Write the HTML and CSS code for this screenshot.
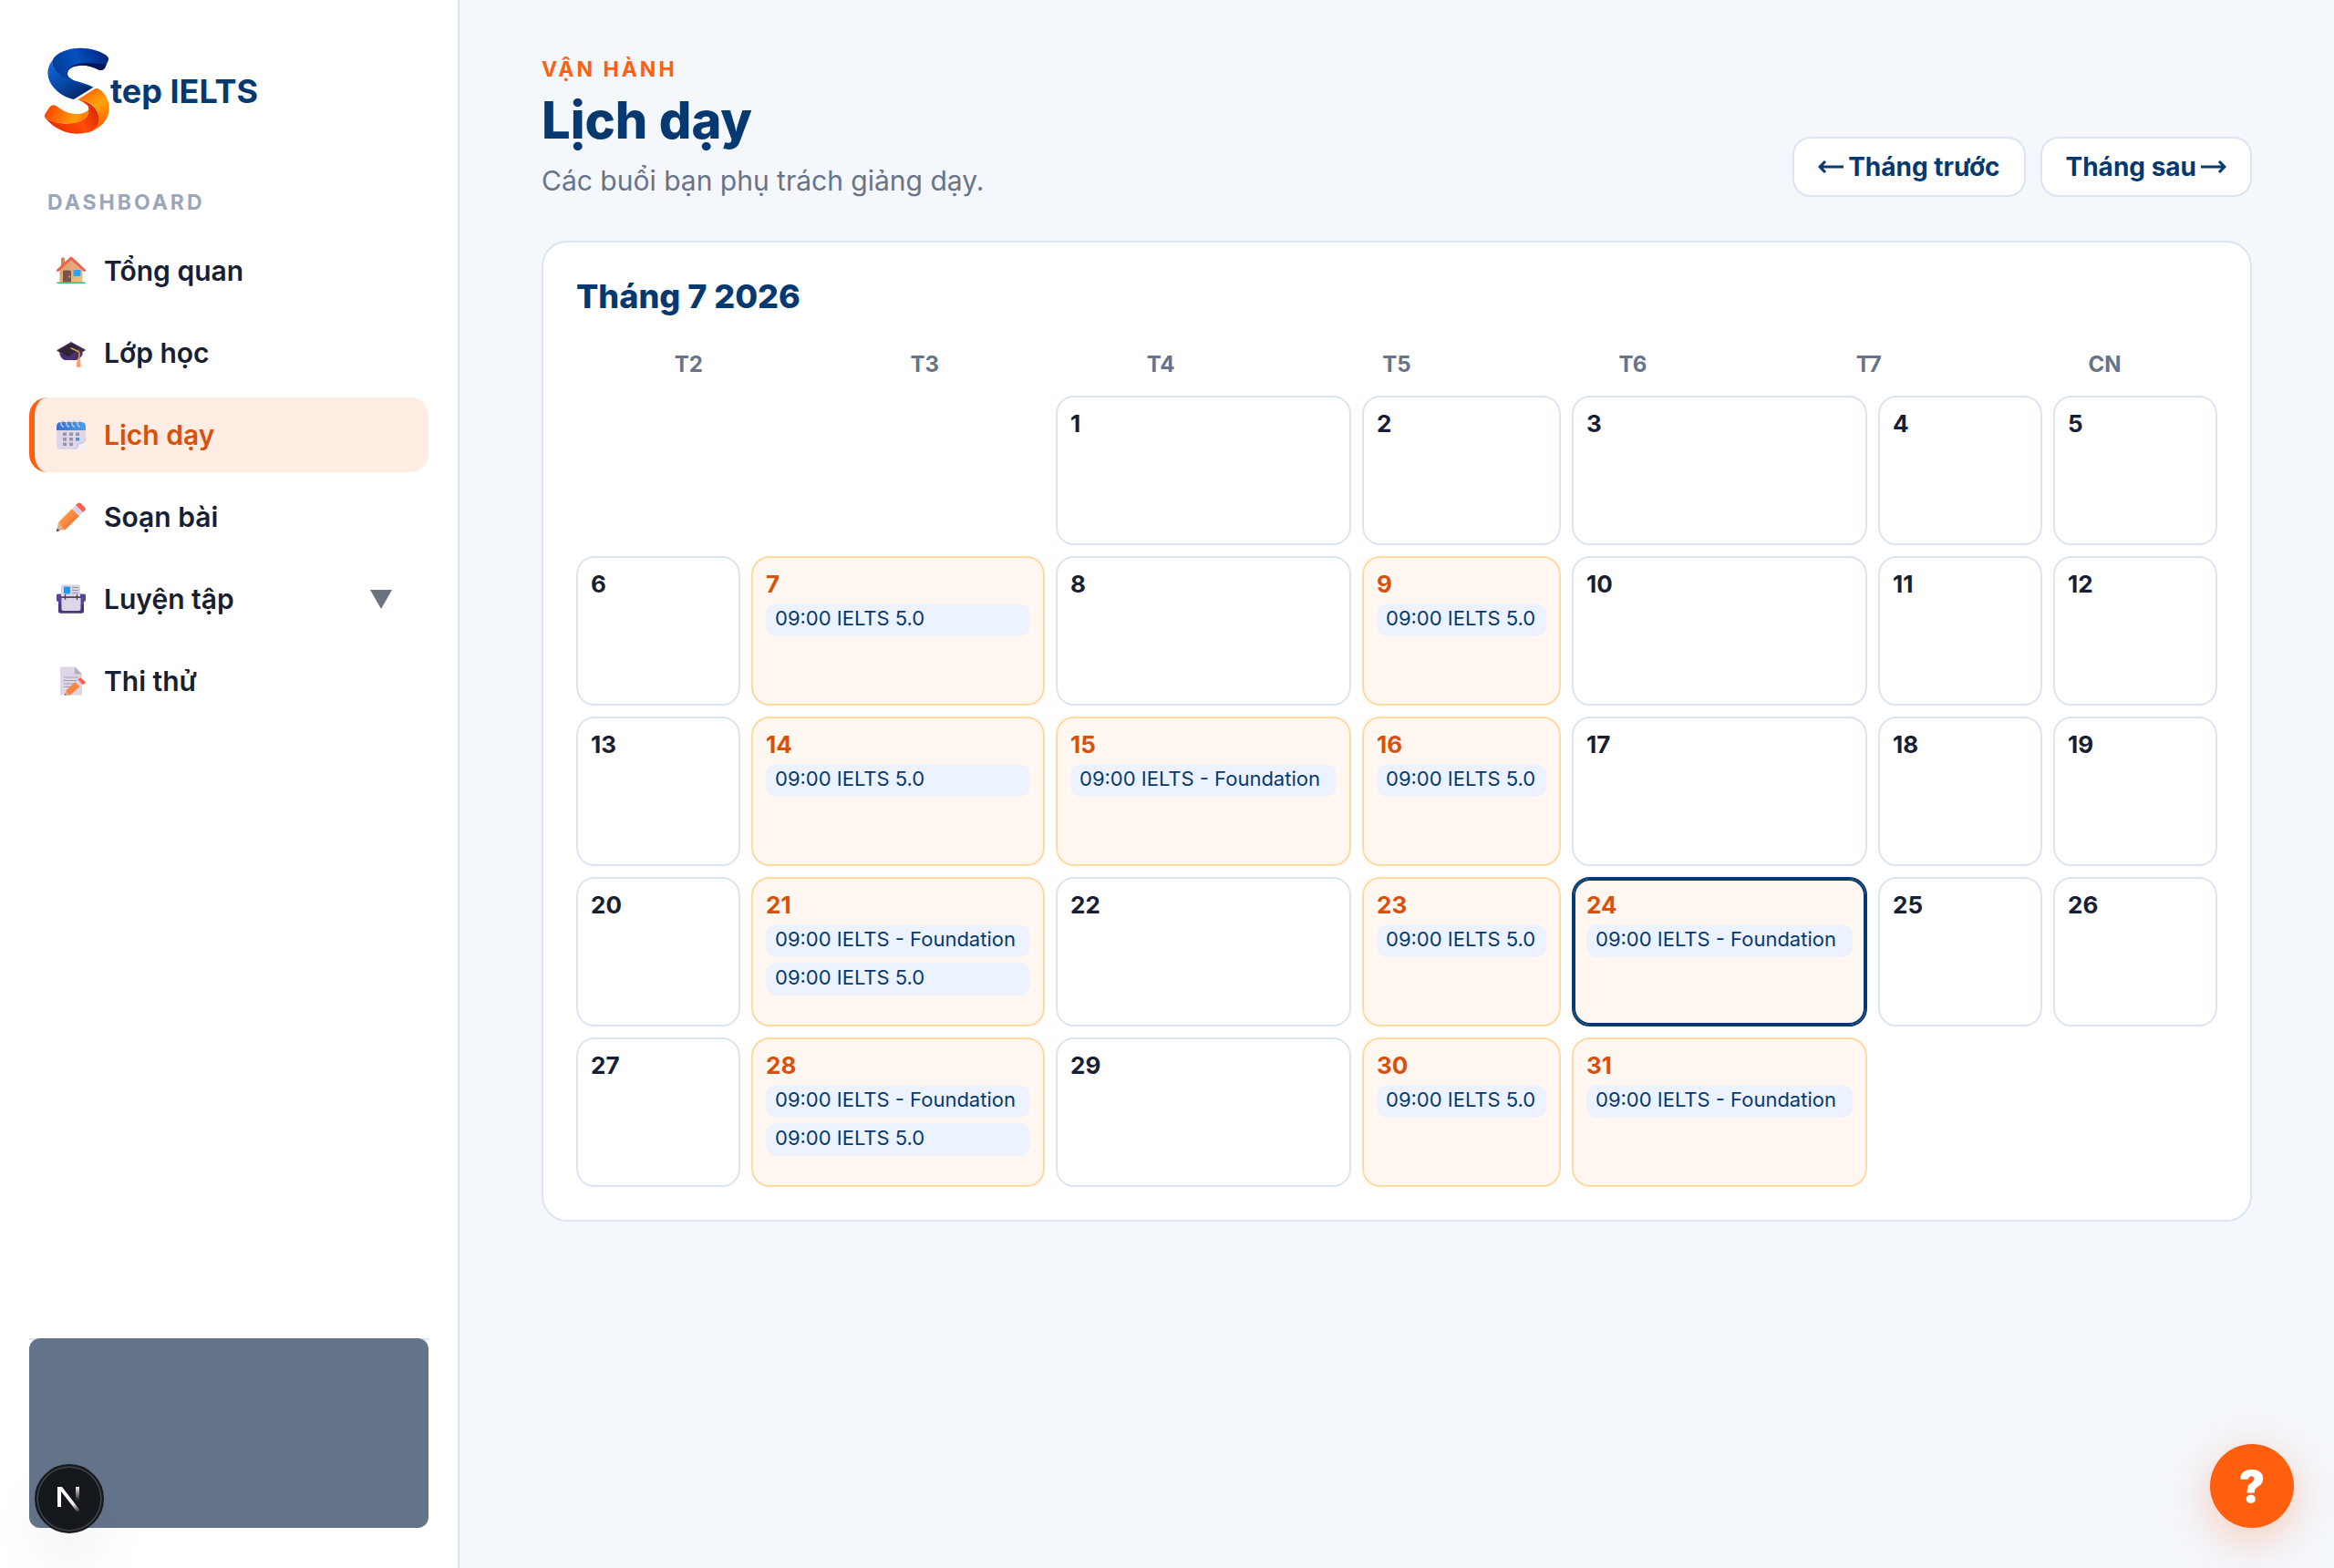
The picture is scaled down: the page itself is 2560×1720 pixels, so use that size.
FILE: index.html
```html
<!DOCTYPE html>
<html lang="vi">
<head>
<meta charset="utf-8">
<meta name="viewport" content="width=device-width, initial-scale=1">
<title>Lịch dạy – Step IELTS</title>
<link rel="stylesheet" href="styles.css">
</head>
<body>
<div class="app">
  <aside class="sidebar">
    <a class="brand" href="#" aria-label="Step IELTS">
      <svg class="brand-mark" viewBox="144 156 219 288" aria-hidden="true">
        <defs>
          <linearGradient id="blueTop" x1="0" y1="0.6" x2="1" y2="0.3"><stop offset="0" stop-color="#033a92"/><stop offset="0.5" stop-color="#0450c0"/><stop offset="1" stop-color="#01257a"/></linearGradient>
          <linearGradient id="blueLeft" x1="0" y1="0" x2="0.9" y2="1"><stop offset="0" stop-color="#1368de"/><stop offset="0.5" stop-color="#0648a8"/><stop offset="1" stop-color="#011c52"/></linearGradient>
          <linearGradient id="amber" x1="0.2" y1="0" x2="0.6" y2="1"><stop offset="0" stop-color="#ff5a00"/><stop offset="0.45" stop-color="#ffa40a"/><stop offset="1" stop-color="#ff5a00"/></linearGradient>
          <linearGradient id="orange" x1="0" y1="0.4" x2="1" y2="0.6"><stop offset="0" stop-color="#ff4200"/><stop offset="0.7" stop-color="#ff9a05"/><stop offset="1" stop-color="#ff7a00"/></linearGradient>
          <linearGradient id="red" x1="0" y1="0.6" x2="1" y2="0.3"><stop offset="0" stop-color="#e62a00"/><stop offset="0.6" stop-color="#ff4c08"/><stop offset="1" stop-color="#d92800"/></linearGradient>
        </defs>
        <path fill="url(#blueLeft)" d="M173 197C150 225 152 262 180 292C198 311 218 322 243 327L307 287C280 272 245 268 215 255C185 240 168 222 173 197Z"/>
        <path fill="url(#blueTop)" d="M173 197C185 172 225 158 265 158C305 158 340 172 354 186Q360 193 355 202L345 224Q338 233 326 230C300 218 282 214 262 216C240 217 222 226 222 242C222 252 235 262 250 267L307 287C270 277 230 268 205 252C180 234 168 218 173 197Z"/>
        <path fill="#01175a" d="M222 242C220 220 250 207 290 207C315 207 333 210 349 213L345 224Q338 233 326 230C300 218 282 214 262 216C240 217 222 226 222 242Z"/>
        <path fill="url(#amber)" d="M256 328L310 293Q318 288 327 294C350 308 362 340 359 362C355 400 325 425 290 436C320 415 330 395 322 370C315 348 290 332 256 328Z"/>
        <path fill="url(#red)" d="M148 388C180 408 230 412 262 400C285 391 295 375 291 352C288 345 275 336 256 328C300 334 322 358 325 385C327 410 310 430 290 436C240 448 190 436 148 388Z"/>
        <path fill="url(#orange)" d="M148 388Q144 380 150 372L164 352Q172 342 184 348C205 363 225 375 250 375C270 375 285 370 291 360C293 380 280 395 262 400C230 412 180 408 148 388Z"/>
      </svg>
      <span class="brand-name">tep IELTS</span>
    </a>

    <p class="nav-label">Dashboard</p>
    <nav class="nav" aria-label="Dashboard">
      <a class="nav-item" href="#">
        <svg class="nav-icon" viewBox="0 0 32 32" aria-hidden="true">
          <defs><linearGradient id="wall" x1="0" y1="0" x2="1" y2="1"><stop offset="0" stop-color="#d79a6c"/><stop offset="1" stop-color="#f3bd83"/></linearGradient></defs>
          <path fill="#c98b5a" d="M5 2.500Q5 1.500 6 1.500H8Q9 1.500 9 2.500V10H5Z"/>
          <path fill="url(#wall)" d="M3.500 14L16 2.500L28.500 14V29H3.500Z"/>
          <path fill="none" stroke="#f0604a" stroke-width="3" stroke-linejoin="round" stroke-linecap="round" d="M1.500 15.500L16 2L30.500 15.500"/>
          <path fill="#7d5150" d="M7 17Q7 15.500 8.500 15.500H14.500Q16 15.500 16 17V28.500H7Z"/>
          <circle cx="14" cy="22.500" r="1" fill="#d9a27c"/>
          <rect x="18.500" y="15" width="8" height="7" rx="1" fill="#2aa4f4"/>
          <path fill="#35c66e" d="M1.500 28.500H30.500Q32 28.500 32 30H0Q0 28.500 1.500 28.500Z"/>
        </svg>
        <span>Tổng quan</span>
      </a>
      <a class="nav-item" href="#">
        <svg class="nav-icon" viewBox="0 0 32 32" aria-hidden="true">
          <defs><linearGradient id="cap" x1="0" y1="0" x2="1" y2="0"><stop offset="0" stop-color="#574466"/><stop offset="1" stop-color="#3c2b57"/></linearGradient></defs>
          <path fill="#4b2d77" d="M3.500 15L16 12L28.500 15V18Q25 24 21 24H10Q6 24 3.500 18Z"/>
          <path fill="url(#cap)" d="M16 4L31.500 12.500Q32 13 31.500 13.500L16 21.500Q15 22 14 21.300L.5 14Q0 13.500.5 13Z"/>
          <path fill="#2f2438" d="M16 5.500L25 10.500L13 20.500L1.500 13.500Z"/>
          <path fill="none" stroke="#e5a545" stroke-width="1.500" stroke-linecap="round" d="M16 11L24 14.500Q25.500 15.500 25 18L24.500 23"/>
          <path fill="#ff9d6b" d="M23 22.500H26L26.700 31Q24.500 33 21.700 31Z"/>
        </svg>
        <span>Lớp học</span>
      </a>
      <a class="nav-item nav-item-active" href="#" aria-current="page">
        <svg class="nav-icon" viewBox="0 0 32 32" aria-hidden="true">
          <defs><linearGradient id="calTop" x1="0" y1="0" x2="1" y2="0"><stop offset="0" stop-color="#3b6fd0"/><stop offset="1" stop-color="#4a9fe6"/></linearGradient></defs>
          <path fill="#ddd6ea" d="M0 10H32V22L22 32H5Q0 32 0 27Z"/>
          <path fill="url(#calTop)" d="M0 11V7Q0 2 5 2H27Q32 2 32 7V11Z"/>
          <g fill="none" stroke="#c9c6d4" stroke-width="1.500"><path d="M9 1Q4 1 5 4Q5.500 7 8 7M15 1Q10 1 11 4Q11.500 7 14 7M21 1Q16 1 17 4Q17.500 7 20 7M27 1Q22 1 23 4Q23.500 7 26 7"/></g>
          <path fill="#9a94a6" d="M7 13.500h4v3.500h-4zM14 13.500h4v3.500h-4zM21 13.500h4v3.500h-4zM7 19h4v3.500h-4zM14 19h4v3.500h-4zM7 24.500h4v3.500h-4zM14 24.500h4v3.500h-4z"/>
          <path fill="#3f97e4" d="M21 19h4v3.500h-4z"/>
          <path fill="#f3f0f8" d="M32 21V27Q32 32 27 32H21Q24 30 24 26Q30 26 32 21Z"/>
          <path fill="none" stroke="#b9b0c8" stroke-width="0.700" d="M32 21Q30 26 24 26Q24 30 21 32"/>
        </svg>
        <span>Lịch dạy</span>
      </a>
      <a class="nav-item" href="#">
        <svg class="nav-icon" viewBox="0 0 32 32" aria-hidden="true">
          <defs><linearGradient id="pencil" x1="0" y1="0" x2="1" y2="1"><stop offset="0.300" stop-color="#ff9a44"/><stop offset="0.800" stop-color="#f26a36"/></linearGradient></defs>
          <path fill="#e3b08e" d="M0 31.500L2 22L9.500 30Z"/>
          <path fill="url(#pencil)" d="M2 22L17 7L25 15L9 30.500Z"/>
          <path fill="#dcd3ea" d="M17 7L21 3L29 11L25 15Z"/>
          <path fill="#ff5f52" d="M21 3L23.500.8Q25 0 26.500 1L31 5.500Q32.500 7 31.500 8.500L29 11Z"/>
          <path fill="#4a2c3c" d="M0 32L.7 28.800L3.300 31.300Z"/>
        </svg>
        <span>Soạn bài</span>
      </a>
      <a class="nav-item" href="#" aria-expanded="false">
        <svg class="nav-icon" viewBox="0 0 32 32" aria-hidden="true">
          <path fill="#55469a" d="M0 12Q0 10.500 1.500 10.500H30.500Q32 10.500 32 12V17Q32 19 30 19V29.500Q30 31.500 28 31.500H4Q2 31.500 2 29.500V19Q0 19 0 17Z"/>
          <path fill="#4c3775" d="M2 22H30V29.500Q30 31.500 28 31.500H4Q2 31.500 2 29.500Z"/>
          <path fill="#dcd4e6" d="M5 2.500Q5 .5 7 .5H24Q26 .5 26 2.500V14H5Z"/>
          <path fill="#ddd5e8" d="M5.500 15H26.500V27Q26.500 29 24.500 29H7.500Q5.500 29 5.500 27Z"/>
          <rect x="8" y="2.500" width="7" height="8" rx="1" fill="#2c97ea"/>
          <path stroke="#9b93a8" stroke-width="1.200" d="M17 3.500H24M17 6.500H24M17 9.500H24"/>
          <path stroke="#4d4356" stroke-width="1.300" d="M4 14H28M9.500 11V17M22.500 11V17"/>
        </svg>
        <span>Luyện tập</span>
        <svg class="nav-caret" viewBox="0 0 24 21" aria-hidden="true"><path fill="#6b7280" d="M0 0H24L12 21Z"/></svg>
      </a>
      <a class="nav-item" href="#">
        <svg class="nav-icon" viewBox="0 0 32 32" aria-hidden="true">
          <path fill="#ded6e6" d="M4 .5H20L28 8.500V31.500H4Z"/>
          <path fill="#b8adc0" d="M20 .5L28 8.500H20Z"/>
          <path stroke="#a79dae" stroke-width="1.100" d="M8 12H24M8 15.500H22M8 19H19M8 22.500H16"/>
          <path fill="#e3b08e" d="M9 31.500L10 27L14.500 31.500Z"/>
          <path fill="#f9853f" d="M10 27L20.500 17L25.500 22L15 31.500H14Z"/>
          <path fill="#dcd3ea" d="M20.500 17L23.500 14.500L28.500 19.500L25.500 22Z"/>
          <path fill="#ff5f52" d="M23.500 14.500L25 13Q26.500 12 28 13.500L30.500 16Q32.500 17.500 31 19L28.500 20Z"/>
          <path fill="#4a2c3c" d="M9 31.500L9.500 29.800L11 31.500Z"/>
        </svg>
        <span>Thi thử</span>
      </a>
    </nav>

    <div class="account"><div class="account-panel"></div></div>
  </aside>

  <main class="main">
    <header class="page-head">
      <div class="page-titles">
        <p class="eyebrow">Vận hành</p>
        <h1 class="page-title">Lịch dạy</h1>
        <p class="page-sub">Các buổi bạn phụ trách giảng dạy.</p>
      </div>
      <div class="month-nav">
        <button class="btn" type="button"><svg class="arrow" viewBox="0 0 28 14" aria-hidden="true"><path d="M28 7H2M8 1L2 7L8 13"/></svg>Tháng trước</button>
        <button class="btn" type="button">Tháng sau<svg class="arrow" viewBox="0 0 28 14" aria-hidden="true"><path d="M0 7H26M20 1L26 7L20 13"/></svg></button>
      </div>
    </header>

    <section class="card">
      <h2 class="month">Tháng 7 2026</h2>
      <div class="weekdays">
        <span>T2</span><span>T3</span><span>T4</span><span>T5</span><span>T6</span><span>T7</span><span>CN</span>
      </div>
      <div class="days">
        <div class="day day-first"><span class="num">1</span></div>
        <div class="day"><span class="num">2</span></div>
        <div class="day"><span class="num">3</span></div>
        <div class="day"><span class="num">4</span></div>
        <div class="day"><span class="num">5</span></div>

        <div class="day"><span class="num">6</span></div>
        <div class="day day-busy"><span class="num">7</span><span class="chip">09:00 IELTS 5.0</span></div>
        <div class="day"><span class="num">8</span></div>
        <div class="day day-busy"><span class="num">9</span><span class="chip">09:00 IELTS 5.0</span></div>
        <div class="day"><span class="num">10</span></div>
        <div class="day"><span class="num">11</span></div>
        <div class="day"><span class="num">12</span></div>

        <div class="day"><span class="num">13</span></div>
        <div class="day day-busy"><span class="num">14</span><span class="chip">09:00 IELTS 5.0</span></div>
        <div class="day day-busy"><span class="num">15</span><span class="chip">09:00 IELTS - Foundation</span></div>
        <div class="day day-busy"><span class="num">16</span><span class="chip">09:00 IELTS 5.0</span></div>
        <div class="day"><span class="num">17</span></div>
        <div class="day"><span class="num">18</span></div>
        <div class="day"><span class="num">19</span></div>

        <div class="day"><span class="num">20</span></div>
        <div class="day day-busy"><span class="num">21</span><span class="chip">09:00 IELTS - Foundation</span><span class="chip">09:00 IELTS 5.0</span></div>
        <div class="day"><span class="num">22</span></div>
        <div class="day day-busy"><span class="num">23</span><span class="chip">09:00 IELTS 5.0</span></div>
        <div class="day day-busy day-today"><span class="num">24</span><span class="chip">09:00 IELTS - Foundation</span></div>
        <div class="day"><span class="num">25</span></div>
        <div class="day"><span class="num">26</span></div>

        <div class="day"><span class="num">27</span></div>
        <div class="day day-busy"><span class="num">28</span><span class="chip">09:00 IELTS - Foundation</span><span class="chip">09:00 IELTS 5.0</span></div>
        <div class="day"><span class="num">29</span></div>
        <div class="day day-busy"><span class="num">30</span><span class="chip">09:00 IELTS 5.0</span></div>
        <div class="day day-busy"><span class="num">31</span><span class="chip">09:00 IELTS - Foundation</span></div>
      </div>
    </section>
  </main>
</div>

<button class="dev-badge" type="button" aria-label="Next.js">
  <svg viewBox="0 0 26 30" width="26" height="30" aria-hidden="true">
    <defs>
      <linearGradient id="diag" x1="12" y1="14" x2="25" y2="29" gradientUnits="userSpaceOnUse"><stop offset="0.400" stop-color="#fff"/><stop offset="1" stop-color="#fff" stop-opacity="0"/></linearGradient>
      <linearGradient id="stem" x1="0" y1="1" x2="0" y2="17" gradientUnits="userSpaceOnUse"><stop offset="0" stop-color="#fff"/><stop offset="1" stop-color="#fff" stop-opacity="0"/></linearGradient>
    </defs>
    <path fill="url(#diag)" d="M0 2H5L25 28L22 30L4 7Z"/>
    <path fill="#fff" d="M0 2H4V24H0Z"/>
    <path fill="url(#stem)" d="M20 2H24V18H20Z"/>
  </svg>
</button>
<button class="help" type="button" aria-label="Trợ giúp">?</button>
</body>
</html>
```

FILE: styles.css
```css
* {
  box-sizing: border-box;
}

body {
  margin: 0;
  background: #f4f7fc;
  color: #172033;
  font-family: Inter, "Noto Sans", sans-serif;
}

h1, h2, p {
  margin: 0;
}

a {
  color: inherit;
  text-decoration: none;
}

button {
  font-family: inherit;
  cursor: pointer;
}

.app {
  display: flex;
  min-height: 100vh;
}

/* Sidebar */
.sidebar {
  display: flex;
  flex-direction: column;
  flex: 0 0 504px;
  padding: 52px 32px 44px;
  background: #fff;
  border-right: 2px solid #dbe5f1;
}

.brand {
  display: flex;
  align-items: center;
  padding-left: 16px;
}

.brand-mark {
  width: 73px;
  height: 96px;
}

.brand-name {
  color: #063970;
  font-size: 36px;
  font-weight: 700;
  line-height: 44px;
}

.nav-label {
  margin: 56px 0 16px;
  padding-left: 20px;
  color: #9aa6bb;
  font-size: 23px;
  font-weight: 700;
  letter-spacing: 3px;
  line-height: 36px;
  text-transform: uppercase;
}

.nav {
  display: flex;
  flex-direction: column;
  gap: 8px;
}

.nav-item {
  display: flex;
  align-items: center;
  gap: 20px;
  height: 82px;
  padding: 0 40px 0 24px;
  border-left: 6px solid transparent;
  border-radius: 20px;
  font-size: 30px;
  font-weight: 600;
}

.nav-item-active {
  border-left-color: #ff5f0f;
  background: #ffece3;
  color: #d9500b;
}

.nav-icon {
  width: 32px;
  height: 32px;
}

.nav-caret {
  width: 24px;
  height: 21px;
  margin-left: auto;
}

.account {
  margin-top: auto;
  border-top: 2px solid #dbe5f1;
}

.account-panel {
  height: 208px;
  margin-top: -2px;
  border-radius: 12px;
  background: #64748b;
}

/* Main column */
.main {
  flex: 1;
  min-width: 0;
  padding: 58px 90px;
}

.page-head {
  display: flex;
  align-items: flex-end;
  justify-content: space-between;
  margin-bottom: 48px;
}

.eyebrow {
  color: #ff5f0f;
  font-size: 23px;
  font-weight: 700;
  letter-spacing: 3px;
  line-height: 36px;
  text-transform: uppercase;
}

.page-title {
  margin: 4px 0 14px;
  color: #063970;
  font-size: 56px;
  font-weight: 800;
  line-height: 68px;
}

.page-sub {
  color: #667389;
  font-size: 30px;
  line-height: 36px;
}

.month-nav {
  display: flex;
  gap: 16px;
}

.btn {
  display: flex;
  align-items: center;
  gap: 5px;
  height: 66px;
  padding: 0 26px;
  border: 2px solid #dbe5f1;
  border-radius: 20px;
  background: #fff;
  color: #063970;
  font-size: 28px;
  font-weight: 700;
}

.arrow {
  width: 28px;
  height: 14px;
  fill: none;
  stroke: currentColor;
  stroke-width: 3;
}

/* Calendar */
.card {
  padding: 36px;
  border: 2px solid #dbe5f1;
  border-radius: 28px;
  background: #fff;
}

.month {
  margin-bottom: 36px;
  color: #063970;
  font-size: 36px;
  font-weight: 800;
  line-height: 46px;
}

.weekdays {
  display: grid;
  grid-template-columns: repeat(7, 1fr);
  gap: 12px;
  margin-bottom: 18px;
  color: #667389;
  font-size: 24px;
  font-weight: 700;
  line-height: 32px;
  text-align: center;
}

.days {
  display: grid;
  grid-template-columns:
    minmax(0, 180fr) minmax(0, 322fr) minmax(0, 324fr) minmax(0, 218fr)
    minmax(0, 324fr) minmax(0, 180fr) minmax(0, 180fr);
  grid-auto-rows: minmax(164px, auto);
  gap: 12px;
}

.day {
  display: flex;
  flex-direction: column;
  gap: 6px;
  padding: 14px;
  border: 2px solid #dbe5f1;
  border-radius: 20px;
}

.day-first {
  grid-column-start: 3;
}

.day-busy {
  border-color: #ffd9a3;
  background: #fff7f0;
}

.day-today {
  border-color: #063970;
  box-shadow: inset 0 0 0 2px #063970;
}

.num {
  font-size: 26px;
  font-weight: 700;
  line-height: 30px;
}

.day-busy .num {
  color: #d9500b;
}

.chip {
  padding: 2px 10px 6px;
  border-radius: 12px;
  background: #ecf3ff;
  color: #063970;
  font-size: 22px;
  line-height: 28px;
  white-space: nowrap;
}

/* Floating controls */
.dev-badge {
  position: fixed;
  bottom: 38px;
  left: 38px;
  display: grid;
  place-items: center;
  width: 76px;
  height: 76px;
  padding: 0;
  border: 2px solid #17191d;
  border-radius: 50%;
  background: #14181d;
  box-shadow: inset 0 0 0 2px #3a3d42, 0 32px 64px rgba(0, 0, 0, 0.06);
}

.help {
  position: fixed;
  right: 44px;
  bottom: 44px;
  width: 92px;
  height: 92px;
  padding: 0;
  border: 0;
  border-radius: 50%;
  background: #ff5f0f;
  box-shadow: 0 12px 48px rgba(255, 95, 15, 0.3);
  color: #fff;
  font-size: 48px;
  font-weight: 900;
}
```
